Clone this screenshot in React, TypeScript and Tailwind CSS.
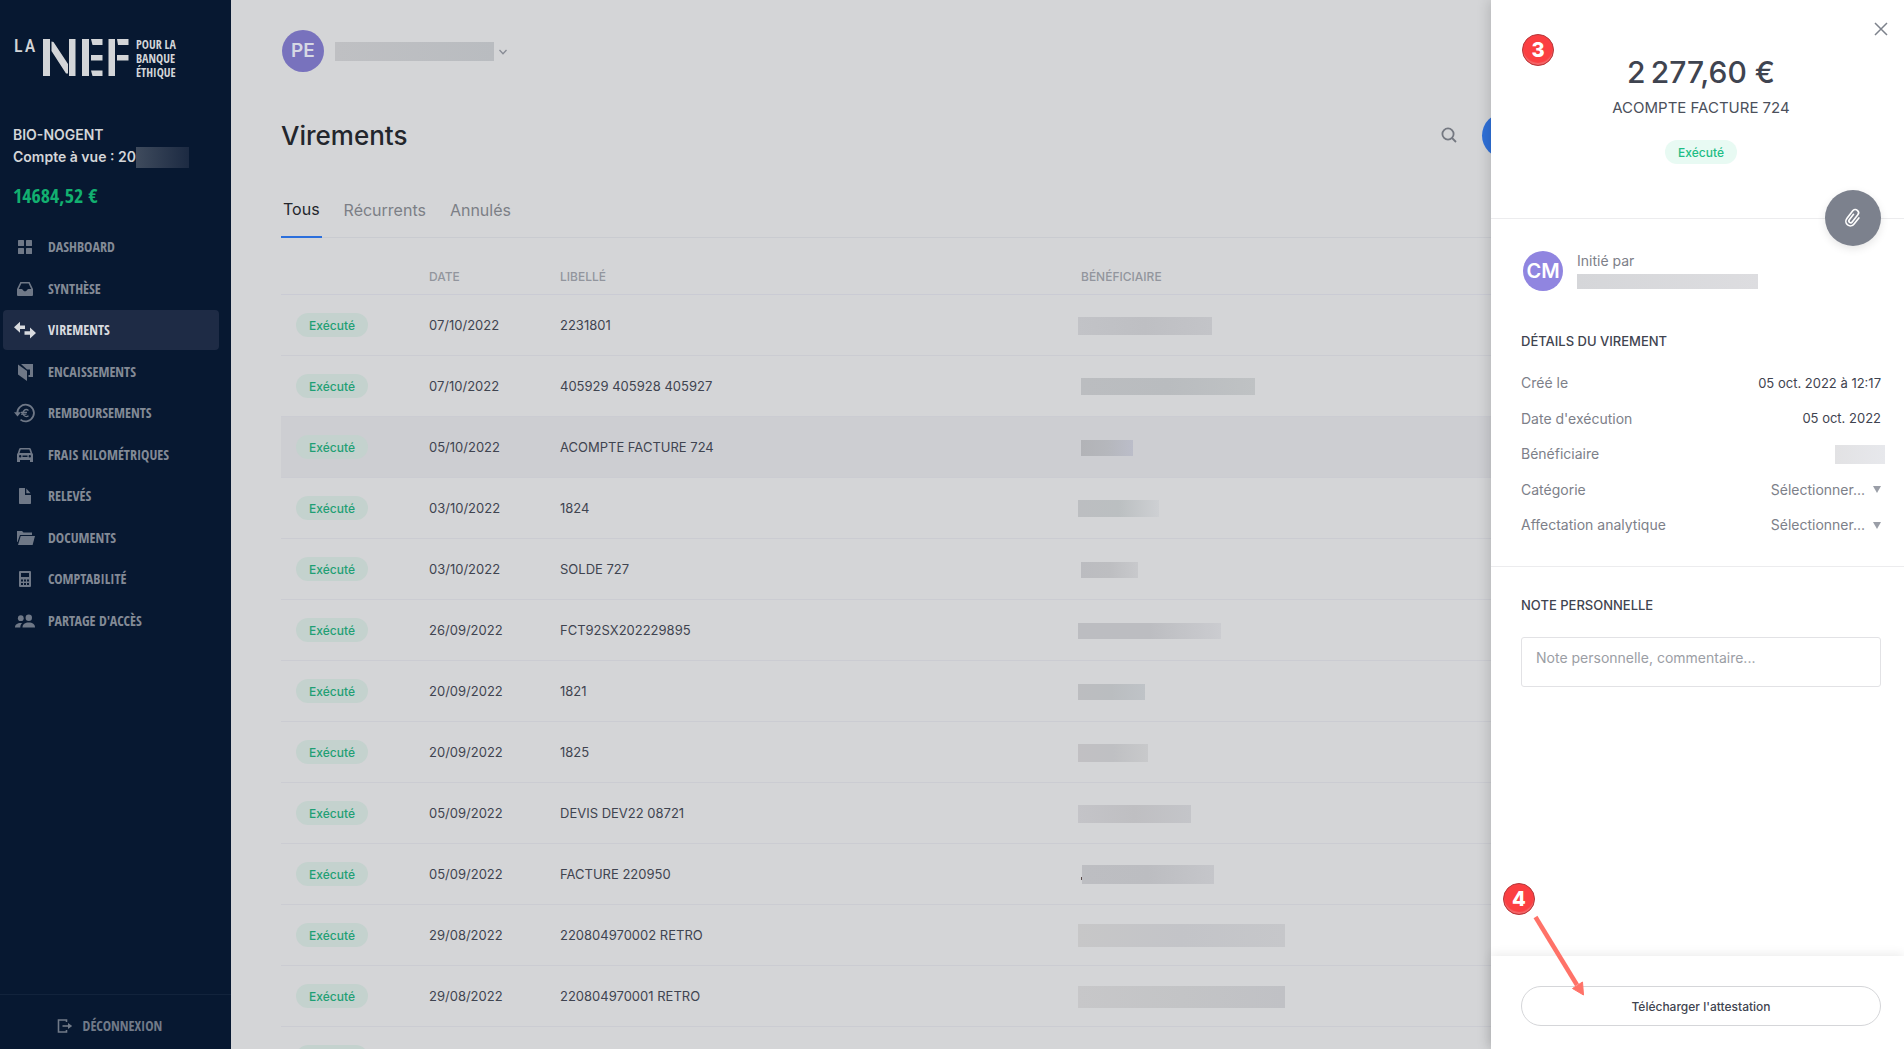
import type { ReactNode } from "react";

const condensed = "font-['Open_Sans_Condensed','Roboto_Condensed',sans-serif]";

type NavItem = { label: string; icon: ReactNode; active?: boolean };

const navItems: NavItem[] = [
  {
    label: "DASHBOARD",
    icon: (
      <g>
        <rect x="5" y="5" width="6" height="6" rx="0.5" />
        <rect x="13" y="5" width="6" height="6" rx="0.5" />
        <rect x="5" y="13" width="6" height="6" rx="0.5" />
        <rect x="13" y="13" width="6" height="6" rx="0.5" />
      </g>
    ),
  },
  {
    label: "SYNTHÈSE",
    icon: (
      <path
        fillRule="evenodd"
        d="M7.4 5h9.2L20 12v6a1 1 0 0 1-1 1H5a1 1 0 0 1-1-1v-6zM8.4 6.6L5.8 12h2.7c.6 0 1 .3 1.2.8.4.9 1.2 1.5 2.3 1.5s1.9-.6 2.3-1.500c.2-.5.6-.8 1.200-.8h2.700L15.600 6.600z"
      />
    ),
  },
  {
    label: "VIREMENTS",
    active: true,
    icon: (
      <g>
        <path d="M1 9.200L7 3.800v3.700h5v3.500H7v3.700z" />
        <path d="M23 15l-6-5.400v3.700h-5.500v3.500H17v3.700z" />
      </g>
    ),
  },
  {
    label: "ENCAISSEMENTS",
    icon: (
      <g>
        <path d="M5 4.500l9 6.500v10L5 14.500z" />
        <path d="M8 4h12v13h-4.500v-2H17V9.500h-3z" />
      </g>
    ),
  },
  {
    label: "REMBOURSEMENTS",
    icon: (
      <g fill="none" stroke="currentColor" strokeWidth="1.800">
        <path d="M4.300 12.500A8.300 8.300 0 1 1 7.500 18.600" />
        <path d="M1 11.200h7l-3.500 4.200z" fill="currentColor" stroke="none" />
        <path d="M15.500 9.400a3.400 3.400 0 1 0 0 5.300M8 11.300h6M8 13.100h5.500" strokeWidth="1.300" />
      </g>
    ),
  },
  {
    label: "FRAIS KILOMÉTRIQUES",
    icon: (
      <path
        fillRule="evenodd"
        d="M7.500 5h9a1.500 1.500 0 0 1 1.400 1l1.400 4.200c.5.300.7.800.7 1.300V19h-3v-2H7v2H4v-7.500c0-.5.200-1 .7-1.300L6.100 6A1.500 1.500 0 0 1 7.500 5zM7.700 6.500L6.500 10h11l-1.200-3.500zM7.200 12.100a1.200 1.200 0 1 0 0 2.400a1.200 1.200 0 0 0 0-2.400zM16.800 12.100a1.200 1.200 0 1 0 0 2.400a1.200 1.200 0 0 0 0-2.400zM9.500 12.500v1.600h5v-1.600z"
      />
    ),
  },
  {
    label: "RELEVÉS",
    icon: (
      <g>
        <path d="M7 4h5v7h6v8.200a.8.800 0 0 1-.8.800H6.800a.8.800 0 0 1-.8-.8V4.800A.8.800 0 0 1 6.800 4z" />
        <path d="M13.300 4.500l4.300 4.800h-4.300z" />
      </g>
    ),
  },
  {
    label: "DOCUMENTS",
    icon: (
      <g>
        <path d="M4 5h5l1.500 1.500H19V9H7L4.500 16H4z" />
        <path d="M7.700 10H22l-2.400 9H5z" />
      </g>
    ),
  },
  {
    label: "COMPTABILITÉ",
    icon: (
      <path
        fillRule="evenodd"
        d="M7 4h10a1 1 0 0 1 1 1v14a1 1 0 0 1-1 1H7a1 1 0 0 1-1-1V5a1 1 0 0 1 1-1zM8 6v4h8V6zM8 12.500v2h2v-2zM11 12.500v2h2v-2zM14 12.500v2h2v-2zM8 16v2h2v-2zM11 16v2h2v-2zM14 16v2h2v-2z"
      />
    ),
  },
  {
    label: "PARTAGE D'ACCÈS",
    icon: (
      <g>
        <circle cx="7.800" cy="9.200" r="2.900" />
        <circle cx="15.800" cy="8.700" r="3.200" />
        <path d="M2 18.500c0-3 2.300-4.500 5.800-4.500h1.400c-1.200 1-1.900 2.500-1.900 4.500z" />
        <path d="M9.500 18.500c0-3.300 2.600-5 6.300-5s6.200 1.700 6.200 5z" />
      </g>
    ),
  },
];

type Transfer = { status: string; date: string; label: string; mask: string; selected?: boolean; dot?: boolean };

const transfers: Transfer[] = [
  { status: "Exécuté", date: "07/10/2022", label: "2231801", mask: "w-[134px] h-[18px] from-[#c2c3c7] via-[#bebfc3] to-[#c3c4c8]" },
  { status: "Exécuté", date: "07/10/2022", label: "405929 405928 405927", mask: "ml-[3px] w-[174px] h-[17px] from-[#bbbdc0] via-[#b9bcbf] to-[#bfc2c4]" },
  { status: "Exécuté", date: "05/10/2022", label: "ACOMPTE FACTURE 724", mask: "ml-[3px] w-[52px] h-4 from-[#b2b3b7] via-[#b5b7bc] to-[#bbbdc9]", selected: true },
  { status: "Exécuté", date: "03/10/2022", label: "1824", mask: "w-[81px] h-[17px] from-[#bcbec1] via-[#bbbfc1] to-[#ced0d3]" },
  { status: "Exécuté", date: "03/10/2022", label: "SOLDE 727", mask: "ml-[3px] w-[57px] h-4 from-[#bbbcc0] via-[#bdbec1] to-[#c8c9cc]" },
  { status: "Exécuté", date: "26/09/2022", label: "FCT92SX202229895", mask: "w-[143px] h-4 from-[#bcbdc1] via-[#bcbdc1] to-[#cbccd0]" },
  { status: "Exécuté", date: "20/09/2022", label: "1821", mask: "w-[67px] h-4 from-[#bcbdc0] via-[#babdc0] to-[#bfc3c7]" },
  { status: "Exécuté", date: "20/09/2022", label: "1825", mask: "w-[70px] h-[18px] from-[#c1c0c3] via-[#bfc0c3] to-[#c8c9cb]" },
  { status: "Exécuté", date: "05/09/2022", label: "DEVIS DEV22 08721", mask: "w-[113px] h-[18px] from-[#c4c4c8] via-[#bfbfc2] to-[#c4c5c9]" },
  { status: "Exécuté", date: "05/09/2022", label: "FACTURE 220950", mask: "w-[132px] h-[19px] from-[#bdbec2] via-[#bcbdc1] to-[#c5c6ca]", dot: true },
  { status: "Exécuté", date: "29/08/2022", label: "220804970002 RETRO", mask: "w-[207px] h-[23px] from-[#c7c7c8] via-[#c3c4c8] to-[#c6c7ca]" },
  { status: "Exécuté", date: "29/08/2022", label: "220804970001 RETRO", mask: "w-[207px] h-[22px] from-[#c7c7c9] via-[#c3c4c6] to-[#c0c1c5]" },
  { status: "", date: "", label: "", mask: "" },
];

function Logo() {
  return (
    <a href="#accueil" aria-label="La Nef, pour la banque éthique" className="flex items-start gap-[7px] pl-[14px] text-[#d3d5d8]">
      <span className="w-[22px] font-['Roboto_Condensed',sans-serif] text-[18px] leading-4 font-medium tracking-[2px]">LA</span>
      <svg viewBox="0 0 86 38" className="mt-px h-[38px] w-[86px] fill-current" aria-hidden="true">
        <path d="M0 0h7v37H0zM26 0h6.500v37H26zM8.500 2.500l2 .5L25 25v9.500h-2L8.500 12z" />
        <path d="M39 0h7v37h-7zM48 0h11.500v6H49.500zM48 16h11.500v5.500H48zM48 31.500h11.500V37H49.500z" />
        <path d="M65.500 0h6.500v37h-6.500zM74 0h11.500v6H75zM74 16h11.500v5.500H74z" />
      </svg>
      <span className={`text-xs leading-[14px] font-semibold ${condensed}`}>
        POUR LA
        <br />
        BANQUE
        <br />
        ÉTHIQUE
      </span>
    </a>
  );
}

function Sidebar() {
  return (
    <aside className="flex w-[231px] shrink-0 flex-col bg-[#071831] pt-[38px]">
      <Logo />
      <div className="mt-11 pl-[13px] text-sm leading-[22px] font-semibold text-[#d3d5d8]">
        <p>BIO-NOGENT</p>
        <p className="flex items-center">
          Compte à vue : 20
          <span className="h-[21px] w-[53px] bg-linear-to-r from-[#3f4b5d] to-[#1c2a42]" />
        </p>
        <p className={`mt-4 text-xl leading-6 font-bold text-[#12b070] ${condensed}`}>14684,52 €</p>
      </div>
      <nav className="mt-[19px] pr-3 pl-[3px]">
        <ul>
          {navItems.map((item) => (
            <li key={item.label} className="odd:mb-0.5 even:mb-px">
              <a
                href="#"
                aria-current={item.active ? "page" : undefined}
                className={`flex h-10 items-center gap-[11px] rounded-sm pl-2.5 text-sm font-bold ${condensed} ${
                  item.active ? "bg-[#1e2b45] text-[#d8dade]" : "text-[#838a96]"
                }`}
              >
                <svg viewBox="0 0 24 24" className={`size-6 shrink-0 fill-current ${item.active ? "" : "text-[#6f7887]"}`} aria-hidden="true">
                  {item.icon}
                </svg>
                {item.label}
              </a>
            </li>
          ))}
        </ul>
      </nav>
      <div className="mt-auto border-t border-[#12233c] pt-[19px] pb-[11px]">
        <button type="button" className={`mx-auto flex items-center gap-2.5 pr-3 text-sm leading-6 font-bold text-[#717a88] ${condensed}`}>
          <svg viewBox="0 0 16 16" className="size-4 fill-none stroke-current" strokeWidth="1.600" aria-hidden="true">
            <path d="M9.500 4V2H1.500v12h8v-2" />
            <path d="M5.500 8h6" />
            <path d="M11 5l4.200 3-4.200 3z" className="fill-current stroke-none" />
          </svg>
          DÉCONNEXION
        </button>
      </div>
    </aside>
  );
}

function TransfersPage() {
  return (
    <main className="min-w-0 flex-1 overflow-hidden pt-[30px] pr-[50px] pl-[50px]">
      <button type="button" className="flex items-center" aria-label="Changer d'utilisateur">
        <span className="ml-px flex size-[42px] items-center justify-center rounded-full bg-[#7872bd] text-[19px] font-semibold text-[#d6d8e4]">PE</span>
        <span className="ml-[11px] h-[19px] w-[159px] bg-linear-to-r from-[#bfc0c3] to-[#b9bcc0]" />
        <svg viewBox="0 0 10 10" className="mt-0.5 ml-1 size-[10px] fill-none stroke-[#878b94]" strokeWidth="1.300" aria-hidden="true">
          <path d="M1.500 3L5 6.700 8.500 3" />
        </svg>
      </button>

      <div className="mt-[41px] flex h-11 items-center">
        <h1 className="pt-0.5 text-[26px] leading-none font-medium text-[#23262c]">Virements</h1>
        <button type="button" aria-label="Rechercher" className="ml-auto">
          <svg viewBox="0 0 16 16" className="size-4 fill-none stroke-[#747881]" strokeWidth="1.800" aria-hidden="true">
            <circle cx="7" cy="7" r="5.600" />
            <path d="M11 11l4 4" />
          </svg>
        </button>
        <button type="button" className="ml-[25px] h-[45px] w-[372px] rounded-full bg-[#2f70d8]" aria-label="Effectuer un virement" />
      </div>

      <div role="tablist" className="mt-[25px] flex h-14 gap-5 border-b border-[#c9cbd0] text-base">
        <button type="button" role="tab" aria-selected="true" className="-mb-px border-b-2 border-[#2b6fdc] px-0.5 text-[#23262c]">
          Tous
        </button>
        <button type="button" role="tab" aria-selected="false" className="px-0.5 text-[#7c7f86]">
          Récurrents
        </button>
        <button type="button" role="tab" aria-selected="false" className="px-0.5 text-[#7c7f86]">
          Annulés
        </button>
      </div>

      <table className="w-full table-fixed text-left text-[13px] text-[#3f4450]">
        <colgroup>
          <col className="w-[148px]" />
          <col className="w-[131px]" />
          <col className="w-[518px]" />
          <col />
        </colgroup>
        <thead>
          <tr className="h-14 border-b border-[#cacbd4] text-xs text-[#92959d]">
            <th aria-label="Statut" />
            <th className="pt-[23px] font-medium">DATE</th>
            <th className="pt-[23px] font-medium">LIBELLÉ</th>
            <th className="pt-[23px] pl-[3px] font-medium">BÉNÉFICIAIRE</th>
          </tr>
        </thead>
        <tbody>
          {transfers.map((t, i) => (
            <tr key={i} className={`h-[61px] border-b border-[#cbccd2] ${t.selected ? "bg-[#cdced2]" : ""}`}>
              <td className="pl-[15px]">
                <span className="flex h-6 w-[72px] items-center justify-center rounded-full bg-[#c4d2ce] pt-0.5 text-xs font-medium text-[#1f9f74]">
                  {t.status}
                </span>
              </td>
              <td className="pt-0.5">{t.date}</td>
              <td className="pt-0.5">{t.label}</td>
              <td className="pt-0.5">
                <div className="flex items-center">
                  {t.dot && <span className="mt-2 ml-[3px] h-[3px] w-px bg-[#5a4a4a]" />}
                  {t.mask && <span className={`bg-linear-to-r ${t.mask}`} />}
                </div>
              </td>
            </tr>
          ))}
        </tbody>
      </table>
    </main>
  );
}

function StepBadge({ value }: { value: string }) {
  return (
    <span className="flex size-8 items-center justify-center rounded-full border border-[#b5383b] bg-[#fb3f42] text-xl leading-none font-extrabold text-white shadow-[inset_0_-2px_1px_#f4686a]">
      {value}
    </span>
  );
}

function SelectRow({ id, label }: { id: string; label: string }) {
  return (
    <div className="flex items-center justify-between odd:h-9 even:h-[35px]">
      <label htmlFor={id}>{label}</label>
      <span className="flex items-center gap-2">
        <select id={id} className="appearance-none text-right">
          <option>Sélectionner...</option>
        </select>
        <svg viewBox="0 0 8 7" className="h-[7px] w-2 fill-[#9a9ea7]" aria-hidden="true">
          <path d="M0 0h8L4 7z" />
        </svg>
      </span>
    </div>
  );
}

function DetailsPanel() {
  return (
    <section
      aria-label="Détail du virement"
      className="absolute inset-y-0 right-0 flex w-[413px] flex-col bg-white text-[#7d8089] shadow-[-2px_0_12px_rgba(0,0,0,0.15)]"
    >
      <header className="relative flex h-[219px] flex-col items-center border-b border-[#ececee] pt-[54px] pr-[23px] pl-[30px]">
        <button type="button" aria-label="Fermer" className="absolute top-[22px] right-4">
          <svg viewBox="0 0 14 14" className="size-[14px] stroke-[#7d828c]" strokeWidth="1.500" aria-hidden="true">
            <path d="M1 1l12 12M13 1L1 13" />
          </svg>
        </button>
        <div className="absolute top-[34px] left-[31px]">
          <StepBadge value="3" />
        </div>
        <h2 className="text-[30px] leading-9 font-medium text-[#3f4450]">{"2\u202f277,60 €"}</h2>
        <p className="mt-[7px] text-[15px] leading-[22px] text-[#4b505b]">ACOMPTE FACTURE 724</p>
        <span className="mt-[21px] flex h-6 w-[72px] items-center justify-center rounded-full bg-[#e8faf3] pt-0.5 text-xs font-medium text-[#1dbd85]">
          Exécuté
        </span>
        <button
          type="button"
          aria-label="Ajouter une pièce jointe"
          className="absolute right-[23px] -bottom-7 flex size-14 items-center justify-center rounded-full bg-[#7c818d] shadow-[0_3px_8px_rgba(0,0,0,0.1)]"
        >
          <svg viewBox="0 0 24 24" className="size-[22px] fill-none stroke-white" strokeWidth="1.800" strokeLinecap="round" aria-hidden="true">
            <g transform="rotate(38 12 12)">
              <path d="M17 8v8.500a5 5 0 0 1-10 0V6a3.500 3.500 0 0 1 7 0v10a2 2 0 0 1-4 0V8.500" />
            </g>
          </svg>
        </button>
      </header>

      <div className="border-b border-[#ececee] pt-8 pr-[23px] pb-[22px] pl-[30px]">
        <div className="flex items-center gap-[14px] pl-0.5">
          <span className="flex size-10 items-center justify-center rounded-full bg-[#9085e0] text-xl font-semibold text-white">CM</span>
          <div className="text-sm leading-5">
            <p>Initié par</p>
            <span className="mt-[3px] mb-0.5 block h-[15px] w-[181px] bg-linear-to-r from-[#d5d6d9] to-[#dddde0]" />
          </div>
        </div>
        <h3 className="mt-10 text-[13px] leading-5 font-medium text-[#3f4450]">DÉTAILS DU VIREMENT</h3>
        <div className="mt-[14px] mb-px text-sm">
          <div className="flex h-9 items-center justify-between">
            <span>Créé le</span>
            <span className="text-[13px] text-[#3f4450]">05 oct. 2022 à 12:17</span>
          </div>
          <div className="flex h-[35px] items-center justify-between">
            <span>Date d'exécution</span>
            <span className="text-[13px] text-[#3f4450]">05 oct. 2022</span>
          </div>
          <div className="flex h-9 items-center justify-between">
            <span>Bénéficiaire</span>
            <span className="-mr-1 h-[19px] w-[50px] bg-linear-to-r from-[#e2e2e4] to-[#e7e8ec]" />
          </div>
          <SelectRow id="categorie" label="Catégorie" />
          <SelectRow id="affectation" label="Affectation analytique" />
        </div>
      </div>

      <div className="pt-7 pr-[23px] pl-[30px]">
        <label htmlFor="note" className="block text-[13px] leading-5 font-medium text-[#3f4450]">
          NOTE PERSONNELLE
        </label>
        <textarea
          id="note"
          placeholder="Note personnelle, commentaire..."
          className="mt-[22px] block h-[50px] w-full resize-none rounded-[3px] border border-[#e2e2e5] px-[14px] py-2.5 text-sm placeholder:text-[#9b9ea5]"
        />
      </div>

      <footer className="relative mt-auto pt-[30px] pr-[23px] pb-[23px] pl-[30px] shadow-[0_-2px_10px_rgba(0,0,0,0.08)]">
        <button type="button" className="h-10 w-full rounded-full border border-[#d5d6d9] pt-0.5 text-xs font-medium text-[#3f4450]">
          Télécharger l'attestation
        </button>
        <div className="pointer-events-none absolute -top-[73px] left-3">
          <StepBadge value="4" />
        </div>
        <svg viewBox="0 0 52 82" className="pointer-events-none absolute -top-[41px] left-[42px] h-[82px] w-[52px]" aria-hidden="true">
          <path d="M2.500 2L44 70" stroke="#ff7268" strokeWidth="4.500" />
          <path d="M50.500 80L39.500 73.500L49.500 67z" fill="#ff7268" stroke="#ff7268" strokeWidth="1" />
        </svg>
      </footer>
    </section>
  );
}

export default function App() {
  return (
    <div className="relative flex h-screen overflow-hidden bg-[#d4d5d7] font-['Inter',sans-serif]">
      <Sidebar />
      <TransfersPage />
      <DetailsPanel />
    </div>
  );
}
